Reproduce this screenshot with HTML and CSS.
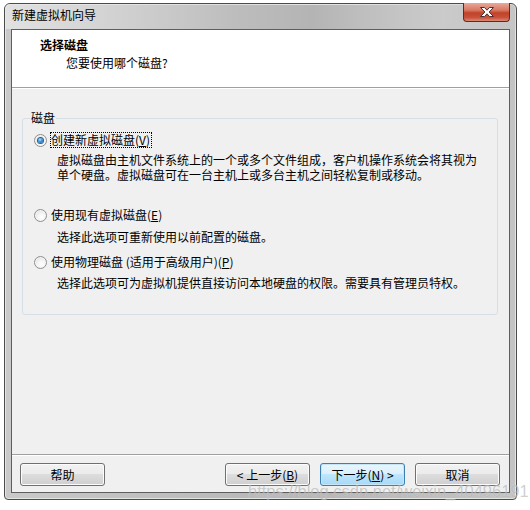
FILE: index.html
```html
<!DOCTYPE html>
<html>
<head>
<meta charset="utf-8">
<link rel="stylesheet" href="styles.css">
</head>
<body>
<div class="window">
  <div class="titlebar"><span class="title">新建虚拟机向导</span></div>
  <div class="close">
    <svg width="18" height="12" viewBox="0 0 18 12"><path d="M2.5 1.5h4l2.5 2.7 2.5-2.7h4l-4.4 4.5 4.4 4.5h-4L9 7.8 6.5 10.5h-4L6.9 6z" fill="#fff" stroke="#4a3030" stroke-width="1"/></svg>
  </div>
  <div class="client">
    <div class="header">
      <div class="h-title">选择磁盘</div>
      <div class="h-sub">您要使用哪个磁盘?</div>
    </div>
    <div class="main">
      <div class="group">
        <span class="legend">磁盘</span>
        <div class="opt opt1">
          <span class="radio checked"></span>
          <span class="lbl focus">创建新虚拟磁盘(<u>V</u>)</span>
        </div>
        <div class="desc desc1">
          <div class="dline">虚拟磁盘由主机文件系统上的一个或多个文件组成，客户机操作系统会将其视为</div>
          <div class="dline">单个硬盘。虚拟磁盘可在一台主机上或多台主机之间轻松复制或移动。</div>
        </div>
        <div class="opt opt2">
          <span class="radio"></span>
          <span class="lbl">使用现有虚拟磁盘(<u>E</u>)</span>
        </div>
        <div class="desc desc2">选择此选项可重新使用以前配置的磁盘。</div>
        <div class="opt opt3">
          <span class="radio"></span>
          <span class="lbl">使用物理磁盘 (适用于高级用户)(<u>P</u>)</span>
        </div>
        <div class="desc desc3">选择此选项可为虚拟机提供直接访问本地硬盘的权限。需要具有管理员特权。</div>
      </div>
    </div>
    <div class="footer">
      <button class="btn">帮助</button>
      <div class="spacer"></div>
      <button class="btn">&lt; 上一步(<u>B</u>)</button>
      <button class="btn default">下一步(<u>N</u>) &gt;</button>
      <button class="btn">取消</button>
    </div>
  </div>
</div>
<div class="watermark">https://blog.csdn.net/weixin_40496191</div>
</body>
</html>
```
FILE: styles.css
```css
html, body {
  margin: 0;
  padding: 0;
  background: #ffffff;
}
body {
  position: relative;
  width: 530px;
  height: 510px;
  overflow: hidden;
  font-family: "Noto Sans CJK SC", "Liberation Sans", sans-serif;
  font-size: 12px;
  color: #000;
}
.window {
  position: relative;
  box-sizing: border-box;
  margin: 3px 0 0 4px;
  width: 513px;
  height: 497px;
  border: 1px solid #4b4b4b;
  border-radius: 6px 6px 4px 4px;
  background: linear-gradient(to right, #c9c9c9 0%, #bcbcbc 40%, #b4b4b4 60%, #c4c4c4 100%);
  padding: 0 6px 6px 6px;
  display: flex;
  flex-direction: column;
  box-shadow: inset 0 0 0 1px #e4e4e4;
}
.titlebar {
  height: 25px;
  display: flex;
  align-items: center;
  padding-bottom: 4px;
  box-sizing: border-box;
  background: linear-gradient(to right, rgba(235,235,235,0.7) 0%, rgba(200,200,200,0.2) 45%, rgba(180,180,180,0) 60%, rgba(215,215,215,0.5) 85%, rgba(200,200,200,0.3) 100%);
  margin: 0 -6px;
  padding-left: 7px;
  border-radius: 5px 5px 0 0;
}
.title {
  font-size: 12px;
  line-height: 16px;
  color: #000;
}
.close {
  position: absolute;
  top: -1px;
  right: 6px;
  width: 47px;
  height: 19px;
  box-sizing: border-box;
  border: 1px solid #5b2c24;
  border-top: none;
  border-radius: 0 0 4px 4px;
  background: linear-gradient(to bottom, #e9a89a 0%, #d77862 40%, #c2422a 55%, #c8503a 80%, #dc8a72 100%);
  display: flex;
  align-items: center;
  justify-content: center;
}
.close svg { display: block; }
.client {
  flex: 1;
  display: flex;
  flex-direction: column;
  border: 1px solid #5e5e5e;
  background: #f0f0f0;
}
.header {
  height: 58px;
  box-sizing: border-box;
  background: #fff;
  border-bottom: 1px solid #a0a0a0;
  padding-top: 7px;
}
.h-title {
  font-weight: bold;
  line-height: 16px;
  padding-left: 28px;
}
.h-sub {
  line-height: 16px;
  padding-left: 54px;
  margin-top: 2px;
}
.main {
  flex: 1;
  padding: 29px 11px 0 10px;
  border-top: 1px solid #fff;
}
.group {
  position: relative;
  box-sizing: border-box;
  height: 197px;
  border: 1px solid #d5dfe5;
  border-radius: 3px;
  padding: 13px 0 0 11px;
}
.legend {
  position: absolute;
  top: -9px;
  left: 7px;
  padding: 0 1px;
  line-height: 16px;
  background: #f0f0f0;
}
.opt {
  display: flex;
  align-items: center;
  height: 16px;
  gap: 4px;
}
.radio {
  box-sizing: border-box;
  width: 13px;
  height: 13px;
  border-radius: 50%;
  border: 1px solid #8f8f8f;
  background: radial-gradient(circle at 60% 65%, #ffffff 0%, #f4f4f4 40%, #d6d6d6 100%);
  box-shadow: inset 0 0 0 1px #f6f6f6;
  display: flex;
  align-items: center;
  justify-content: center;
}
.radio.checked::after {
  content: "";
  width: 5px;
  height: 5px;
  border-radius: 50%;
  background: radial-gradient(circle at 40% 35%, #bfe3ff 0%, #3a8fd6 45%, #0f5aa0 100%);
  box-shadow: 0 0 0 1px #275f8f;
}
.lbl {
  line-height: 14px;
  border: 1px dotted transparent;
  padding: 0 1px 0 0;
  margin-left: -1px;
}
.lbl.focus {
  border-color: #000;
}
.desc {
  line-height: 15px;
  padding-left: 23px;
}
.dline {
  height: 15px;
  line-height: 15px;
  white-space: nowrap;
}
.desc1 { margin-top: 4px; }
.opt2 { margin-top: 25px; }
.desc2 { margin-top: 6px; }
.opt3 { margin-top: 10px; }
.desc3 { margin-top: 5px; }
.footer {
  box-sizing: border-box;
  height: 38px;
  border-top: 1px solid #a0a0a0;
  box-shadow: inset 0 1px 0 #fff;
  display: flex;
  align-items: flex-start;
  padding: 8px 9px 0 8px;
  gap: 10px;
}
.spacer { flex: 1; }
.btn {
  width: 85px;
  height: 23px;
  box-sizing: border-box;
  border: 1px solid #707070;
  border-radius: 3px;
  background: linear-gradient(to bottom, #f2f2f2 0%, #ebebeb 49%, #dddddd 50%, #cfcfcf 100%);
  box-shadow: inset 0 0 0 1px #fcfcfc;
  font-family: "Noto Sans CJK SC", "Liberation Sans", sans-serif;
  font-size: 12px;
  line-height: 14px;
  color: #000;
  padding: 0;
}
.btn.default {
  border-color: #3c7fb1;
  background: linear-gradient(to bottom, #eaf6fd 0%, #d9f0fc 49%, #bee6fd 50%, #a7d9f5 100%);
  box-shadow: inset 0 0 0 1px #c6e6f8;
}
.btn u, .lbl u { text-decoration: underline; }
.watermark {
  position: absolute;
  left: 248px;
  top: 482px;
  font-family: "Liberation Sans", sans-serif;
  font-size: 16.5px;
  line-height: 19px;
  color: rgba(130,130,130,0.4);
  text-shadow: 0 0 1px rgba(255,255,255,0.6);
  white-space: nowrap;
}
```
